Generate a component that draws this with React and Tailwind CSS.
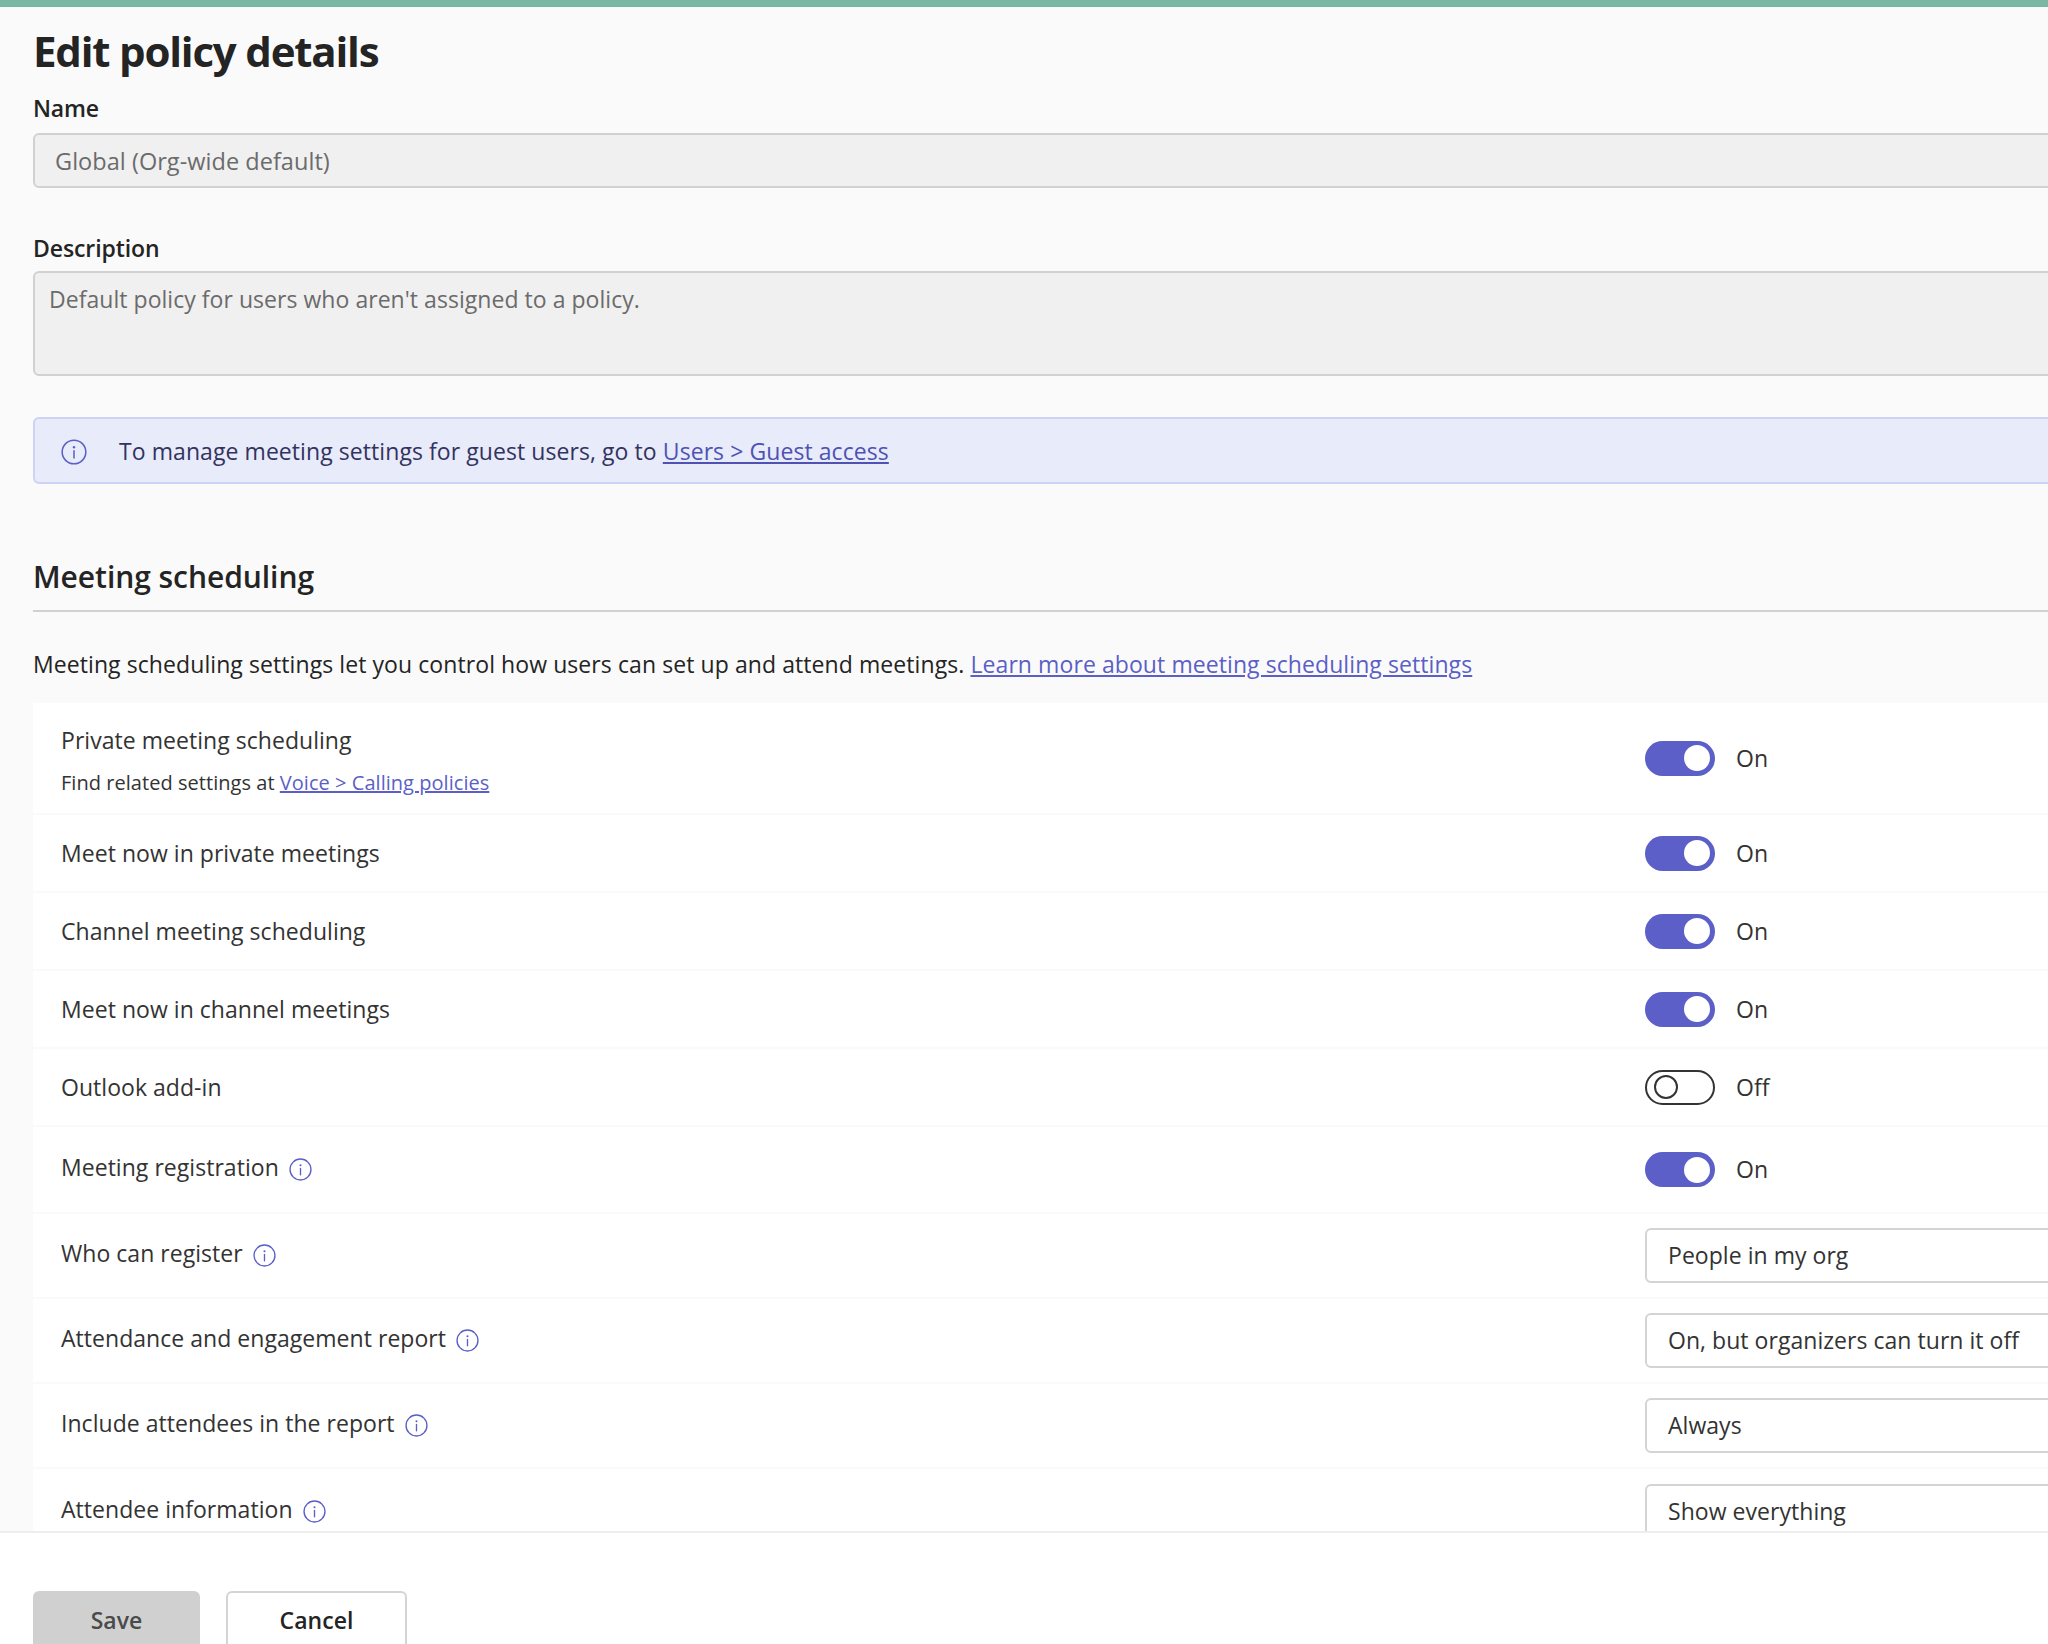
import React from "react";

function Info({ className }) {
  return (
    <svg viewBox="0 0 22 22" fill="none" className={className}>
      <circle cx="11" cy="11" r="10" stroke="#5b5fc7" strokeWidth="1.3" />
      <circle cx="11" cy="7" r="1" fill="#5b5fc7" />
      <path d="M11 10v6" stroke="#5b5fc7" strokeWidth="1.3" strokeLinecap="round" />
    </svg>
  );
}

function Toggle({ on }) {
  return (
    <div className="flex items-center gap-[21px]">
      {on ? (
        <div className="flex h-[35px] w-[70px] items-center justify-end rounded-full bg-[#5b5fc7] pr-[5px]">
          <div className="h-[26px] w-[26px] rounded-full bg-white" />
        </div>
      ) : (
        <div className="flex h-[35px] w-[70px] items-center rounded-full border-2 border-[#333333] bg-white pl-[7px]">
          <div className="h-[24px] w-[24px] rounded-full border-2 border-[#333333]" />
        </div>
      )}
      <span className="text-[23px] text-[#333333]">{on ? "On" : "Off"}</span>
    </div>
  );
}

function Select({ value }) {
  return (
    <div className="flex h-[55px] w-[600px] items-center rounded-[6px] border-2 border-[#d4d4d4] bg-white pl-[21px] text-[23px] text-[#333333]">
      {value}
    </div>
  );
}

function Row({ height, label, info, sub, control, last }) {
  return (
    <div className={`grid grid-cols-[1584px_1fr] items-center border-[#fafafa] pl-[28px] ${height} ${last ? "" : "border-b-2"}`}>
      <div className={sub ? "pt-[4px]" : ""}>
        <div className="flex items-center gap-[10px] text-[23px] text-[#333333]">
          <span className={info ? "pb-[4px]" : ""}>{label}</span>
          {info && <Info className="h-[23px] w-[23px]" />}
        </div>
        {sub}
      </div>
      {control}
    </div>
  );
}

export default function App() {
  return (
    <div className="flex h-[1644px] flex-col overflow-hidden bg-white font-['Open_Sans','Liberation_Sans',sans-serif] tracking-[0.04px]">
      <div className="h-[7px] shrink-0 bg-[#7ab8a4]" />
      <main className="h-[1524px] shrink-0 overflow-hidden bg-[#fafafa] pl-[33px]">
        <div className="w-[2100px]">
          <h1 className="pt-[16px] text-[42px] leading-[56px] font-bold tracking-[-1.2px] text-[#242424]">Edit policy details</h1>
          <label className="mt-[13px] block text-[23px] leading-[32px] font-semibold tracking-[-0.15px] text-[#242424]">Name</label>
          <div className="mt-[9px] flex h-[55px] items-center rounded-[6px] border-2 border-[#d1d1d1] bg-[#f0f0f0] pt-[3px] pl-[20px] text-[23.5px] text-[#6b6b6b]">
            Global (Org-wide default)
          </div>
          <label className="mt-[44px] block text-[23px] leading-[32px] font-semibold tracking-[-0.1px] text-[#242424]">Description</label>
          <div className="mt-[7px] h-[105px] rounded-[6px] border-2 border-[#d1d1d1] bg-[#f0f0f0] pt-[9px] pl-[14px] text-[23px] text-[#6b6b6b]">
            Default policy for users who aren't assigned to a policy.
          </div>
          <div className="mt-[41px] flex h-[67px] items-center rounded-[6px] border-2 border-[#ced2f5] bg-[#e8ebfa] pt-[2px] pl-[26px] text-[23px] tracking-[0.07px] text-[#333360]">
            <Info className="h-[26px] w-[26px]" />
            <span className="ml-[32px]">
              To manage meeting settings for guest users, go to <a className="text-[#4f52b2] underline">Users &gt; Guest access</a>
            </span>
          </div>
          <h2 className="mt-[73px] text-[30px] leading-[40px] font-semibold tracking-[-0.05px] text-[#242424]">Meeting scheduling</h2>
          <div className="mt-[13px] h-[2px] bg-[#d1d1d1]" />
          <p className="mt-[36px] text-[23px] leading-[32px] tracking-[0.08px] text-[#242424]">
            Meeting scheduling settings let you control how users can set up and attend meetings. <a className="text-[#5b5fc7] underline">Learn more about meeting scheduling settings</a>
          </p>
          <div className="mt-[23px] bg-white">
            <Row
              height="h-[112px]"
              label="Private meeting scheduling"
              control={<Toggle on />}
              sub={
                <div className="mt-[12px] text-[20px] leading-[28px] text-[#333333]">
                  Find related settings at <a className="text-[#5b5fc7] underline">Voice &gt; Calling policies</a>
                </div>
              }
            />
            <Row height="h-[78px]" label="Meet now in private meetings" control={<Toggle on />} />
            <Row height="h-[78px]" label="Channel meeting scheduling" control={<Toggle on />} />
            <Row height="h-[78px]" label="Meet now in channel meetings" control={<Toggle on />} />
            <Row height="h-[78px]" label="Outlook add-in" control={<Toggle on={false} />} />
            <Row height="h-[87px]" label="Meeting registration" info control={<Toggle on />} />
            <Row height="h-[85px]" label="Who can register" info control={<Select value="People in my org" />} />
            <Row height="h-[85px]" label="Attendance and engagement report" info control={<Select value="On, but organizers can turn it off" />} />
            <Row height="h-[85px]" label="Include attendees in the report" info control={<Select value="Always" />} />
            <Row height="h-[85px]" label="Attendee information" info last control={<Select value="Show everything" />} />
          </div>
        </div>
      </main>
      <footer className="flex-1 border-t-2 border-[#eeeeee] bg-white pt-[58px] pl-[33px]">
        <div className="flex gap-[26px]">
          <button className="h-[60px] w-[167px] rounded-[6px] bg-[#d0d0d0] pb-[2px] text-[23px] font-semibold text-[#4a4a4a]">Save</button>
          <button className="h-[60px] w-[181px] rounded-[6px] border-2 border-[#d4d4d4] bg-white pb-[2px] text-[23px] font-semibold text-[#242424]">Cancel</button>
        </div>
      </footer>
    </div>
  );
}
